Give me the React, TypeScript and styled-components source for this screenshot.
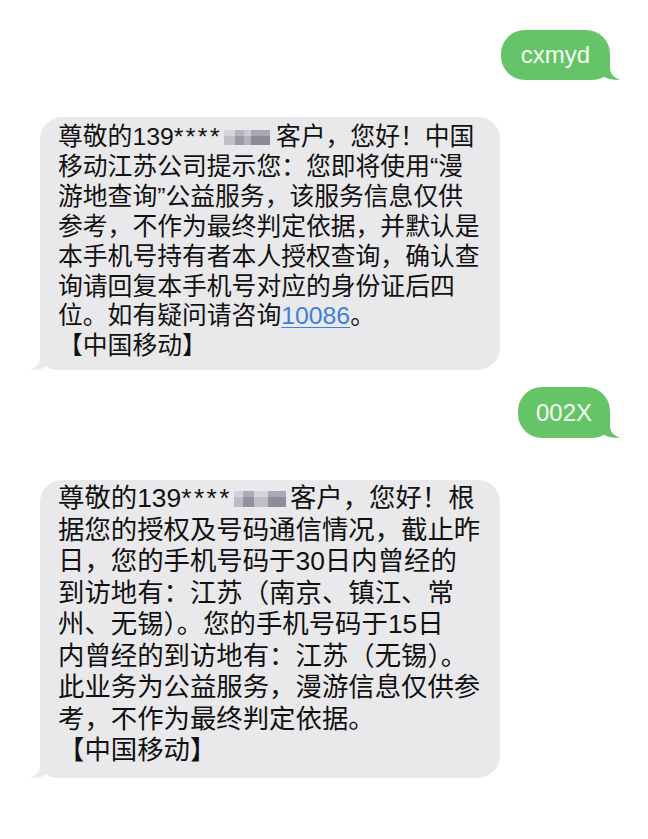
import React from "react";
import styled, { createGlobalStyle } from "styled-components";

const GlobalStyle = createGlobalStyle`
  html, body { margin: 0; padding: 0; background: #ffffff; }
  body { font-family: "Liberation Sans", "Noto Sans CJK SC", sans-serif; }
`;

const Thread = styled.div`
  display: flex;
  flex-direction: column;
  padding: 30px 38px 40px 40px;
  width: 648px;
  box-sizing: border-box;
`;

const Row = styled.div<{ $out?: boolean; $mt: number }>`
  display: flex;
  justify-content: ${(p) => (p.$out ? "flex-end" : "flex-start")};
  margin-top: ${(p) => p.$mt}px;
`;

const OutBubble = styled.div<{ $h: number; $px: number }>`
  position: relative;
  display: flex;
  align-items: center;
  height: ${(p) => p.$h}px;
  padding: 0 ${(p) => p.$px}px;
  border-radius: 24px;
  background: #66c468;
  color: #f6fff6;
  font-family: "Liberation Sans", sans-serif;
  font-size: 24px;
`;

const InBubble = styled.div<{ $fs: number; $lh: number; $pt: number; $pb: number }>`
  position: relative;
  width: 460px;
  box-sizing: border-box;
  padding: ${(p) => p.$pt}px 0 ${(p) => p.$pb}px 18px;
  border-radius: 22px;
  background: #e9e9eb;
  color: #111111;
  font-size: ${(p) => p.$fs}px;
  line-height: ${(p) => p.$lh}px;
`;

const Text = styled.div`
  position: relative;
`;

const Line = styled.span`
  display: block;
  white-space: nowrap;
`;

const Stars = styled.span`
  letter-spacing: 2.4px;
`;

const Blur = styled.span<{ $w: number; $ml: number; $mr: number; $v: number }>`
  display: inline-block;
  width: ${(p) => p.$w}px;
  height: 0.62em;
  margin-left: ${(p) => p.$ml}px;
  margin-right: ${(p) => p.$mr}px;
  vertical-align: baseline;
  background:
    linear-gradient(180deg, rgba(255, 255, 255, 0.2) 0 40%, rgba(0, 0, 0, 0.05) 40% 100%),
    ${(p) =>
      p.$v === 1
        ? "linear-gradient(90deg, #c9c9d1 0 24%, #a2a2ae 24% 44%, #bdbdc6 44% 58%, #9292a0 58% 100%)"
        : "linear-gradient(90deg, #c6c6ce 0 18%, #9a9aa7 18% 38%, #c8c8d0 38% 66%, #9494a2 66% 100%)"};
`;

const Link = styled.span`
  color: #3f7fdc;
  text-decoration: underline;
  text-decoration-thickness: 1px;
  text-underline-offset: 3px;
`;

const TailSvg = styled.svg<{ $out?: boolean }>`
  position: absolute;
  bottom: 0;
  width: 34px;
  height: 24px;
  ${(p) =>
    p.$out
      ? "right: -10px; transform: scaleX(-1);"
      : "left: -10px;"}
`;

const Tail: React.FC<{ color: string; out?: boolean }> = ({ color, out }) => (
  <TailSvg $out={out} viewBox="0 0 34 24" aria-hidden="true">
    <path
      d="M10,0 L10,11 C10,18 6.5,21.8 0,23.4 C6,24.4 12,23.2 16,20.8 C19.5,23 24,24 29,24 L34,24 L34,0 Z"
      fill={color}
    />
  </TailSvg>
);

export default function App() {
  return (
    <>
      <GlobalStyle />
      <Thread>
        <Row $out $mt={0}>
          <OutBubble $h={50} $px={20}>
            <Tail color="#66c468" out />
            <Text>cxmyd</Text>
          </OutBubble>
        </Row>

        <Row $mt={37}>
          <InBubble $fs={24.8} $lh={29.9} $pt={5} $pb={9}>
            <Tail color="#e9e9eb" />
            <Text>
              <Line>
                尊敬的139<Stars>****</Stars>
                <Blur $v={1} $w={46} $ml={2} $mr={6} />
                客户，您好！中国
              </Line>
              <Line>移动江苏公司提示您：您即将使用“漫</Line>
              <Line>游地查询”公益服务，该服务信息仅供</Line>
              <Line>参考，不作为最终判定依据，并默认是</Line>
              <Line>本手机号持有者本人授权查询，确认查</Line>
              <Line>询请回复本手机号对应的身份证后四</Line>
              <Line>
                位。如有疑问请咨询<Link>10086</Link>。
              </Line>
              <Line>【中国移动】</Line>
            </Text>
          </InBubble>
        </Row>

        <Row $out $mt={17}>
          <OutBubble $h={51} $px={18}>
            <Tail color="#66c468" out />
            <Text>002X</Text>
          </OutBubble>
        </Row>

        <Row $mt={42}>
          <InBubble $fs={26.4} $lh={31.5} $pt={3} $pb={11}>
            <Tail color="#e9e9eb" />
            <Text>
              <Line>
                尊敬的139<Stars>****</Stars>
                <Blur $v={2} $w={52} $ml={2} $mr={4} />
                客户，您好！根
              </Line>
              <Line>据您的授权及号码通信情况，截止昨</Line>
              <Line>日，您的手机号码于30日内曾经的</Line>
              <Line>到访地有：江苏（南京、镇江、常</Line>
              <Line>州、无锡）。您的手机号码于15日</Line>
              <Line>内曾经的到访地有：江苏（无锡）。</Line>
              <Line>此业务为公益服务，漫游信息仅供参</Line>
              <Line>考，不作为最终判定依据。</Line>
              <Line>【中国移动】</Line>
            </Text>
          </InBubble>
        </Row>
      </Thread>
    </>
  );
}
